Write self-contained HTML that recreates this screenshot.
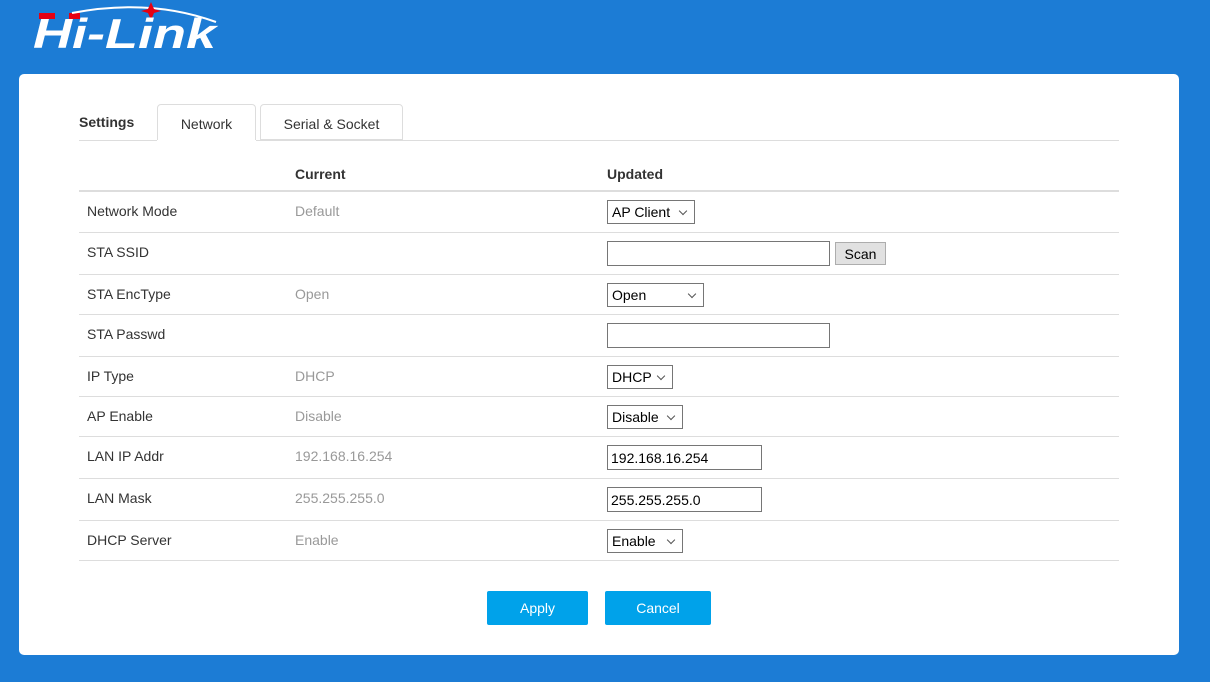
<!DOCTYPE html>
<html><head><meta charset="utf-8"><style>
*{box-sizing:border-box;margin:0;padding:0}
body{width:1210px;height:682px;background:#1c7cd5;font-family:"Liberation Sans",sans-serif;font-size:14px;color:#333;position:relative;overflow:hidden}
.card{position:absolute;left:19px;top:74px;width:1160px;height:581px;background:#fff;border-radius:5px}
.a{position:absolute}
.line{position:absolute;left:79px;width:1040px;height:1px;background:#ddd}
.lbl{position:absolute;left:87px;color:#333}
.cur{position:absolute;left:295px;color:#999}
.sel{position:absolute;left:607px;height:24px;border:1px solid #767676;background:#fff;color:#000;font-size:14px;padding:3px 0 0 4px}
.sel:after{content:"";position:absolute;right:8px;top:7px;width:5px;height:5px;border-right:1px solid #555;border-bottom:1px solid #555;transform:rotate(45deg)}
.inp{position:absolute;left:607px;height:25px;border:1px solid #767676;background:#fff;color:#000;padding:4px 0 0 3px}
.btn{position:absolute;top:591px;height:34px;background:#00a2ea;color:#fff;text-align:center;line-height:35px;border-radius:2px}
</style></head><body>
<svg class="a" style="left:30px;top:0px" width="195" height="55" viewBox="0 0 195 55">
<rect x="9" y="13" width="16" height="6" fill="#e60012"/>
<rect x="39" y="13" width="11" height="6" fill="#e60012"/>
<path d="M42 13 Q120 -2 186 22" stroke="#fff" stroke-width="2" fill="none"/>
<path d="M121 2 L124 9 L131 11 L124 13 L121 20 L118 13 L111 11 L118 9Z" fill="#e60012"/>
<text x="3" y="48" font-family="Liberation Sans" font-weight="bold" font-style="italic" font-size="42" fill="#fff" textLength="183" lengthAdjust="spacingAndGlyphs">Hi-Link</text>
</svg>
<div class="card"></div>
<div class="a" style="left:79px;top:114px;font-weight:bold">Settings</div>
<div class="a" style="left:157px;top:104px;width:99px;height:37px;border:1px solid #ddd;border-bottom:none;border-radius:4px 4px 0 0;background:#fff;text-align:center;line-height:38px">Network</div>
<div class="a" style="left:260px;top:104px;width:143px;height:36px;border:1px solid #ddd;border-radius:4px 4px 0 0;text-align:center;line-height:38px">Serial &amp; Socket</div>
<div class="line" style="top:140px"></div>
<div class="a" style="left:157px;top:140px;width:99px;height:1px;background:#fff"></div>
<div class="a" style="left:295px;top:166px;font-weight:bold">Current</div>
<div class="a" style="left:607px;top:166px;font-weight:bold">Updated</div>
<div class="line" style="top:190px;height:2px"></div>

<div class="lbl" style="top:203px">Network Mode</div><div class="cur" style="top:203px">Default</div>
<div class="sel" style="top:200px;width:88px">AP Client</div>
<div class="line" style="top:232px"></div>
<div class="lbl" style="top:244px">STA SSID</div>
<div class="inp" style="top:241px;width:223px"></div>
<div class="a" style="left:835px;top:242px;width:51px;height:23px;background:#e1e1e1;border:1px solid #adadad;text-align:center;line-height:22px;color:#000">Scan</div>
<div class="line" style="top:274px"></div>
<div class="lbl" style="top:286px">STA EncType</div><div class="cur" style="top:286px">Open</div>
<div class="sel" style="top:283px;width:97px">Open</div>
<div class="line" style="top:314px"></div>
<div class="lbl" style="top:326px">STA Passwd</div>
<div class="inp" style="top:323px;width:223px"></div>
<div class="line" style="top:356px"></div>
<div class="lbl" style="top:368px">IP Type</div><div class="cur" style="top:368px">DHCP</div>
<div class="sel" style="top:365px;width:66px">DHCP</div>
<div class="line" style="top:396px"></div>
<div class="lbl" style="top:408px">AP Enable</div><div class="cur" style="top:408px">Disable</div>
<div class="sel" style="top:405px;width:76px">Disable</div>
<div class="line" style="top:436px"></div>
<div class="lbl" style="top:448px">LAN IP Addr</div><div class="cur" style="top:448px">192.168.16.254</div>
<div class="inp" style="top:445px;width:155px">192.168.16.254</div>
<div class="line" style="top:478px"></div>
<div class="lbl" style="top:490px">LAN Mask</div><div class="cur" style="top:490px">255.255.255.0</div>
<div class="inp" style="top:487px;width:155px">255.255.255.0</div>
<div class="line" style="top:520px"></div>
<div class="lbl" style="top:532px">DHCP Server</div><div class="cur" style="top:532px">Enable</div>
<div class="sel" style="top:529px;width:76px">Enable</div>
<div class="line" style="top:560px"></div>
<div class="btn" style="left:487px;width:101px">Apply</div>
<div class="btn" style="left:605px;width:106px">Cancel</div>
</body></html>
